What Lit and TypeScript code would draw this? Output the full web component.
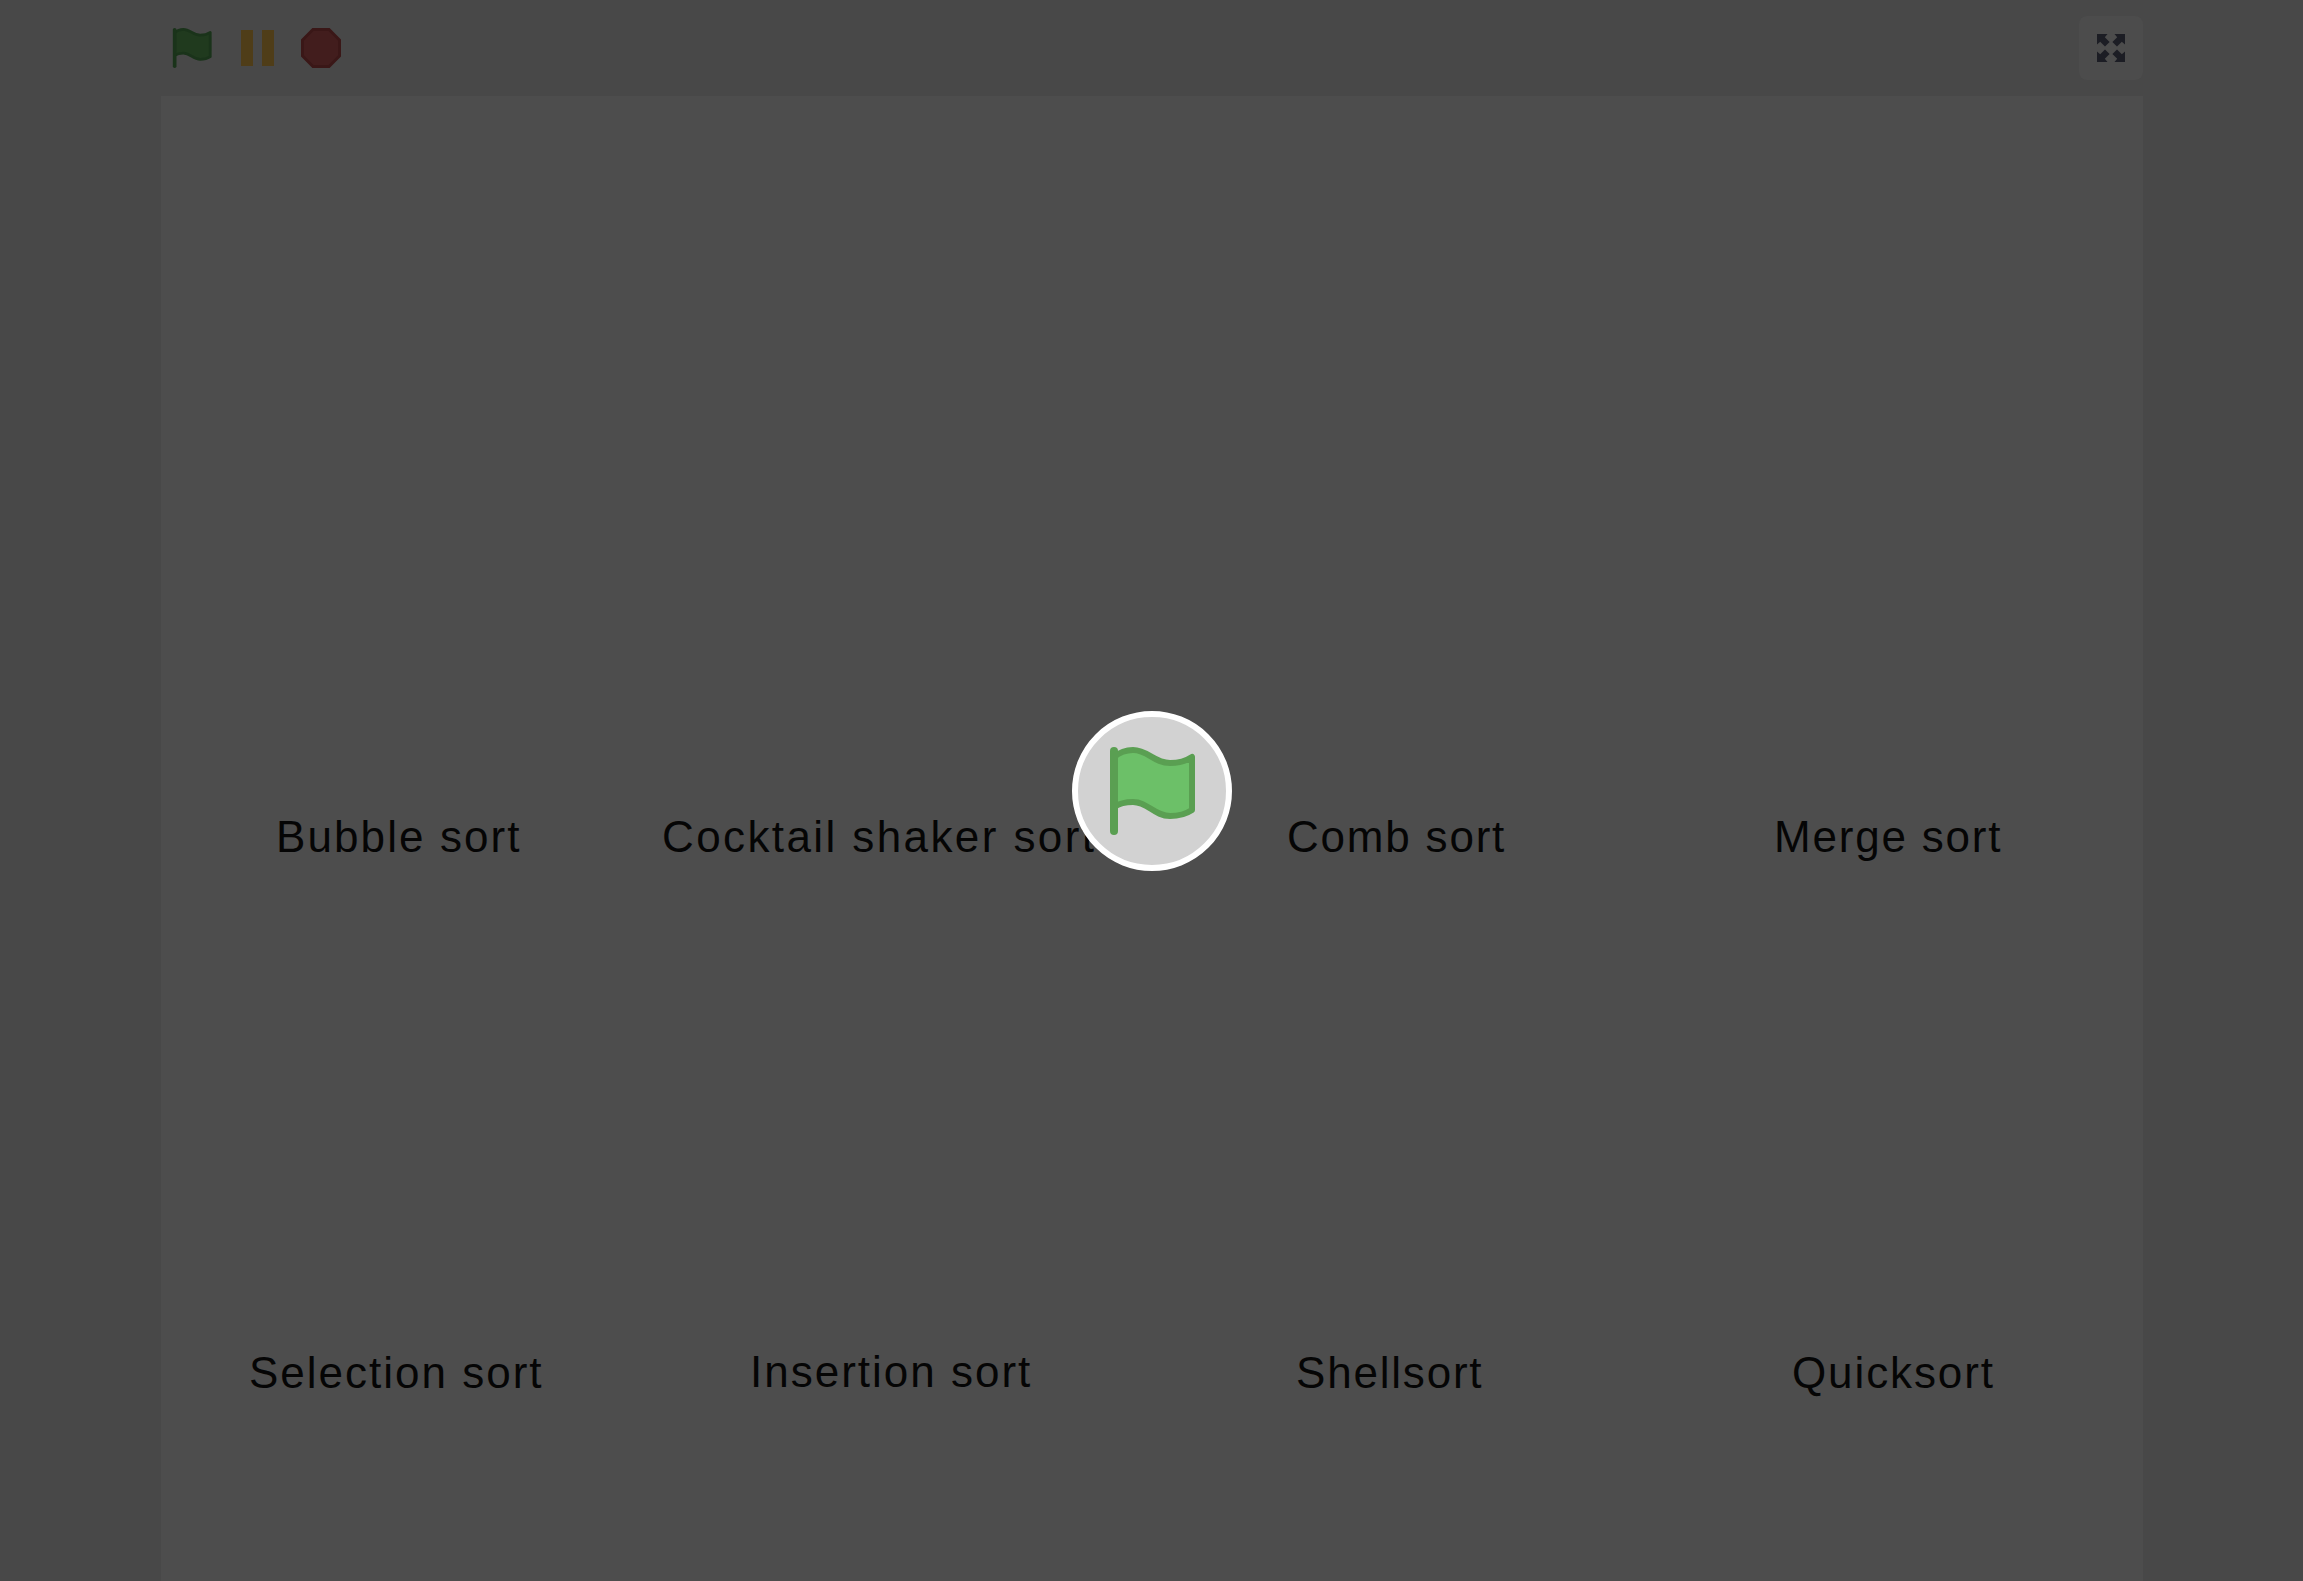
import { LitElement, html, css } from "lit";
import { customElement } from "lit/decorators.js";

const labels: [string, number, number, number][] = [
  ["Bubble sort", 276, 810, 2.1],
  ["Cocktail shaker sort", 662, 810, 2.4],
  ["Comb sort", 1287, 810, 1.8],
  ["Merge sort", 1774, 810, 1.8],
  ["Selection sort", 249, 1346, 2],
  ["Insertion sort", 750, 1345, 2],
  ["Shellsort", 1296, 1346, 1.8],
  ["Quicksort", 1792, 1346, 1.9],
];

const FLAG = "M8 12 C14 7 20 5 27 5 C42 5 48 18 64 18 C72 18 80 16 86 12 V65 C80 69 72 71 64 71 C48 71 42 57 27 57 C20 57 14 58 8 62 Z";

@customElement("app-root")
export class AppRoot extends LitElement {
  static styles = css`
    :host { display: block; width: 2303px; height: 1581px; overflow: hidden; position: relative; background: #484848; font-family: "Liberation Sans", sans-serif; }
    .wrap { width: 1982px; margin-left: 161px; display: flex; flex-direction: column; }
    .bar { height: 96px; flex: none; display: flex; align-items: center; justify-content: space-between; box-sizing: border-box; padding-left: 10px; }
    .tools { display: flex; align-items: center; gap: 27px; }
    .tools svg { display: block; }
    .small-flag { margin-right: 1px; }
    .small-flag .f { fill: #203a1e; stroke: #1a331a; stroke-width: 6; stroke-linejoin: round; }
    .small-flag .p { stroke: #1a331a; stroke-width: 8; stroke-linecap: round; fill: none; }
    .pause { fill: #4f3d18; }
    .stop { fill: #421d1d; stroke: #3a1717; stroke-width: 3; }
    .fs { width: 64px; height: 64px; border-radius: 8px; background: #4c4c4c; display: flex; align-items: center; justify-content: center; }
    .fs path { fill: #1c1d24; }
    .stage { height: 1485px; background: #4d4d4d; position: relative; }
    .label { position: absolute; font-size: 44px; line-height: 54px; color: #050505; white-space: nowrap; }
    .start { position: absolute; left: 1072px; top: 711px; width: 160px; height: 160px; box-sizing: border-box; border-radius: 50%; background: #d2d2d2; border: 6px solid #fff; display: flex; align-items: center; justify-content: center; }
    .start svg { display: block; }
    .start .f { fill: #6cc068; stroke: #5a9f52; stroke-width: 6; stroke-linejoin: round; }
    .start .p { stroke: #5a9f52; stroke-width: 8; stroke-linecap: round; fill: none; }
  `;
  render() {
    return html`
      <div class="wrap">
        <div class="bar">
          <div class="tools">
            <svg class="small-flag" width="42" height="42" viewBox="0 0 92 92">
              <path class="f" d=${FLAG}/>
              <path class="p" d="M8 6 V86"/>
            </svg>
            <svg width="33" height="36" viewBox="0 0 33 36">
              <rect class="pause" x="0" y="0" width="12" height="36"/>
              <rect class="pause" x="21" y="0" width="12" height="36"/>
            </svg>
            <svg width="40" height="40" viewBox="0 0 40 40">
              <polygon class="stop" points="12,1.500 28,1.500 38.500,12 38.500,28 28,38.500 12,38.500 1.500,28 1.500,12"/>
            </svg>
          </div>
          <div class="fs">
            <svg width="28" height="28" viewBox="0 0 28 28">
              <path d="M0 0H10.500L7.800 3.200 12.600 8 8 12.600 3.200 7.800 0 10.500Z"/>
              <path d="M28 0H17.500L20.200 3.200 15.400 8 20 12.600 24.800 7.800 28 10.500Z"/>
              <path d="M0 28H10.500L7.800 24.800 12.600 20 8 15.400 3.200 20.200 0 17.500Z"/>
              <path d="M28 28H17.500L20.200 24.800 15.400 20 20 15.400 24.800 20.200 28 17.500Z"/>
            </svg>
          </div>
        </div>
        <div class="stage">
          ${labels.map(([t, x, y, s]) => html`<div class="label" style="left:${x - 161}px;top:${y - 96}px;letter-spacing:${s}px">${t}</div>`)}
        </div>
      </div>
      <div class="start">
        <svg width="92" height="92" viewBox="0 0 92 92">
          <path class="f" d=${FLAG}/>
          <path class="p" d="M8 6 V86"/>
        </svg>
      </div>
    `;
  }
}
